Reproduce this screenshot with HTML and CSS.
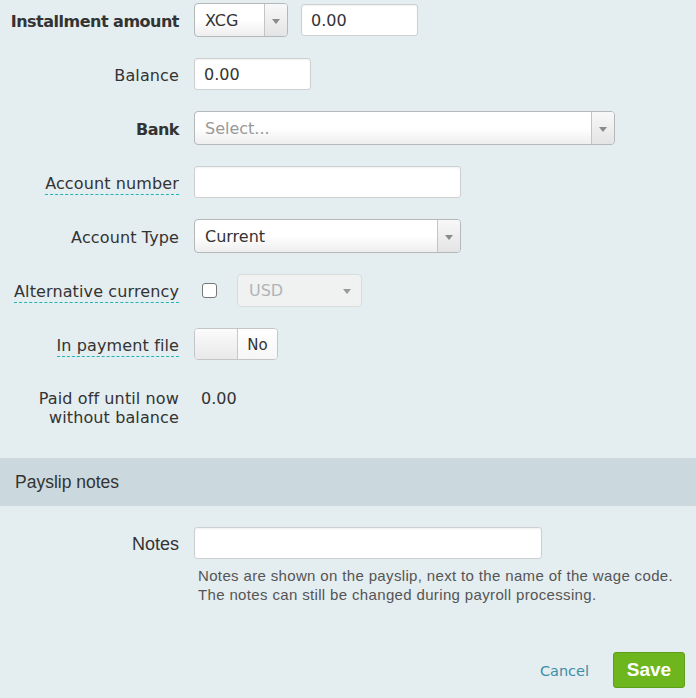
FILE: index.html
```html
<!DOCTYPE html>
<html>
<head>
<meta charset="utf-8">
<link rel="stylesheet" href="styles.css">
</head>
<body>
<div class="page">
  <div class="form">
    <div class="row">
      <div class="label label-bold">Installment amount</div>
      <div class="controls">
        <div class="select select-xcg"><span class="select-value">XCG</span><span class="select-arrow"></span></div>
        <div class="input input-amount">0.00</div>
      </div>
    </div>
    <div class="row">
      <div class="label">Balance</div>
      <div class="controls"><div class="input input-balance">0.00</div></div>
    </div>
    <div class="row">
      <div class="label label-bold">Bank</div>
      <div class="controls"><div class="select select-bank"><span class="select-value placeholder">Select...</span><span class="select-arrow"></span></div></div>
    </div>
    <div class="row">
      <div class="label"><span class="hint">Account number</span></div>
      <div class="controls"><div class="input input-account"></div></div>
    </div>
    <div class="row">
      <div class="label">Account Type</div>
      <div class="controls"><div class="select select-type"><span class="select-value">Current</span><span class="select-arrow"></span></div></div>
    </div>
    <div class="row">
      <div class="label"><span class="hint">Alternative currency</span></div>
      <div class="controls">
        <span class="checkbox"></span>
        <div class="select select-disabled"><span class="select-value">USD</span><span class="select-arrow"></span></div>
      </div>
    </div>
    <div class="row">
      <div class="label"><span class="hint">In payment file</span></div>
      <div class="controls">
        <div class="toggle"><span class="toggle-knob"></span><span class="toggle-text">No</span></div>
      </div>
    </div>
    <div class="row row-text">
      <div class="label label-multi">Paid off until now<br>without balance</div>
      <div class="value">0.00</div>
    </div>
  </div>

  <div class="section-header">Payslip notes</div>

  <div class="form form-notes">
    <div class="row">
      <div class="label label-narrow">Notes</div>
      <div class="controls"><div class="input input-notes"></div></div>
    </div>
    <div class="help">Notes are shown on the payslip, next to the name of the wage code.<br>The notes can still be changed during payroll processing.</div>
  </div>

  <div class="footer">
    <a class="cancel">Cancel</a>
    <button class="save">Save</button>
  </div>
</div>
</body>
</html>
```

FILE: styles.css
```css
html, body {
  margin: 0;
  padding: 0;
}
body {
  background: #e4edf0;
  font-family: "DejaVu Sans", Verdana, sans-serif;
  font-size: 16px;
  color: #333;
  width: 696px;
  height: 698px;
  overflow: hidden;
}
.page {
  display: flex;
  flex-direction: column;
}
.form {
  padding-top: 3px;
  display: flex;
  flex-direction: column;
  gap: 20px;
}
.row {
  display: grid;
  grid-template-columns: 179px 1fr;
  column-gap: 15px;
  align-items: center;
  height: 34px;
}
.label {
  text-align: right;
  white-space: nowrap;
  line-height: 19px;
  padding-top: 2px;
  letter-spacing: 0.12px;
}
.label-bold {
  font-weight: bold;
  letter-spacing: -0.5px;
}
.hint {
  border-bottom: 1px dashed #22b3b5;
  padding-bottom: 1px;
}
.controls {
  display: flex;
  align-items: center;
  gap: 13px;
}
.input {
  box-sizing: border-box;
  height: 32px;
  background: #fff;
  border: 1px solid #cdd0d1;
  border-radius: 3px;
  box-shadow: inset 0 1px 2px rgba(0,0,0,0.06);
  padding: 1px 9px 0;
  line-height: 29px;
  color: #333;
}
.input-amount { width: 117px; }
.input-balance { width: 117px; }
.input-account { width: 267px; }
.input-notes { width: 348px; }
.select {
  box-sizing: border-box;
  height: 34px;
  display: flex;
  border: 1px solid #b5b8b9;
  border-radius: 4px;
  background: linear-gradient(#ffffff 0%, #ffffff 50%, #eeeeee 100%);
  overflow: hidden;
}
.select-value {
  flex: 1;
  padding: 1px 0 0 10px;
  line-height: 31px;
}
.placeholder { color: #999; }
.select-arrow {
  width: 22px;
  border-left: 1px solid #c4c4c4;
  background: linear-gradient(#f8f8f8, #e4e4e4);
  position: relative;
}
.select-arrow::after {
  content: "";
  position: absolute;
  left: 7px;
  top: 15px;
  border-left: 4px solid transparent;
  border-right: 4px solid transparent;
  border-top: 5px solid #8a8a8a;
}
.select-xcg { width: 94px; }
.select-bank { width: 421px; }
.select-type { width: 267px; }
.select-disabled {
  width: 125px;
  height: 33px;
  margin-left: 7px;
  background: #f0f1f1;
  border-color: #d9dcdd;
  color: #b0b4b8;
}
.select-disabled .select-value { padding-left: 11px; line-height: 30px; }
.select-disabled .select-arrow {
  border-left: none;
  background: transparent;
}
.select-disabled .select-arrow::after {
  left: 4px;
  top: 14px;
  border-top-color: #9a9a9a;
}
.checkbox {
  box-sizing: border-box;
  width: 15px;
  height: 15px;
  margin-left: 8px;
  border: 1.5px solid #777;
  border-radius: 3px;
  background: #fff;
}
.toggle {
  box-sizing: border-box;
  width: 84px;
  height: 32px;
  display: flex;
  border: 1px solid #c3c6c7;
  border-radius: 4px;
  overflow: hidden;
  background: #fff;
}
.toggle-knob {
  width: 42px;
  background: linear-gradient(#fbfbfb, #e9e9e9);
  border-right: 1px solid #c8c8c8;
}
.toggle-text {
  flex: 1;
  text-align: center;
  line-height: 30px;
  font-size: 15px;
  padding-top: 1px;
  background: linear-gradient(#ffffff, #f6f6f6);
}
.row-text {
  height: auto;
  align-items: start;
  margin-top: 6px;
}
.value {
  padding-left: 7px;
  padding-top: 2px;
  line-height: 19px;
}
.section-header {
  margin-top: 31px;
  height: 48px;
  background: #cbd9de;
  padding-left: 15px;
  line-height: 48px;
  font-family: "Liberation Sans Narrow", "Liberation Sans", sans-serif;
  font-size: 17.5px;
  color: #333;
}
.form-notes {
  padding-top: 20px;
  gap: 6px;
}
.label-narrow {
  font-family: "Liberation Sans Narrow", "Liberation Sans", sans-serif;
  font-size: 18px;
  letter-spacing: 0;
}
.help {
  margin-left: 198px;
  font-family: "Liberation Sans Narrow", "Liberation Sans", sans-serif;
  font-size: 15px;
  letter-spacing: 0.35px;
  line-height: 19px;
  color: #555;
}
.footer {
  margin-top: 48px;
  display: flex;
  justify-content: flex-end;
  align-items: center;
  gap: 24px;
  padding-right: 11px;
}
.cancel {
  color: #3b8fa6;
  font-size: 14.5px;
  padding-top: 2px;
  cursor: pointer;
}
.save {
  width: 72px;
  height: 36px;
  border: 1px solid #5fa01a;
  border-radius: 3px;
  background: #6db61e;
  color: #fff;
  font-family: "Liberation Sans", Arial, sans-serif;
  font-weight: bold;
  font-size: 19px;
  padding: 0;
}
```
